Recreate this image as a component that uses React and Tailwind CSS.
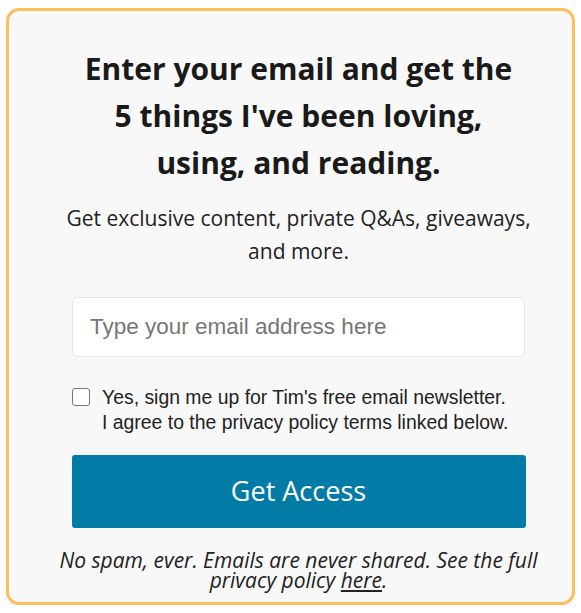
export default function App() {
    return (
        <div className="w-[581px] h-[613px] bg-white pt-[8px] px-[6px]">
            <div className="w-[569px] h-[597px] border-[3px] border-[#fdbe5e] rounded-[13px] bg-[#f8f8f8] flex flex-col items-center pl-[16px] pt-[34px]">
                {/* Heading */}
                <h2 className="text-center font-['Open_Sans',sans-serif] font-bold text-[30px] leading-[47px] text-[#1a1a1a] whitespace-nowrap">
                    Enter your email and get the<br />5 things I've been loving,<br />using, and reading.
                </h2>
                <p className="mt-[16px] text-center font-['Open_Sans',sans-serif] text-[21px] leading-[33px] text-[#222] whitespace-nowrap">
                    Get exclusive content, private Q&amp;As, giveaways,<br />and more.
                </p>

                {/* Email input */}
                <input
                    type="email"
                    placeholder="Type your email address here"
                    className="mt-[29px] w-[453px] h-[60px] bg-white border border-[#e4e4e4] rounded-[6px] px-[17px] font-['Liberation_Sans',Arial,sans-serif] text-[22.5px] text-[#333] placeholder:text-[#767676] outline-none"
                />

                {/* Consent */}
                <label className="mt-[28px] w-[453px] flex items-start gap-[12px] font-['Liberation_Sans',Arial,sans-serif] text-[19.4px] leading-[25px] text-[#222] whitespace-nowrap">
                    <input type="checkbox" className="mt-[3px] w-[18px] h-[18px] shrink-0 appearance-none bg-white border border-[#767676] rounded-[3px]" />
                    <span>Yes, sign me up for Tim's free email newsletter.<br />I agree to the privacy policy terms linked below.</span>
                </label>

                {/* Submit */}
                <button className="mt-[20px] w-[454px] h-[73px] bg-[#027ca7] rounded-[3px] text-white font-['Open_Sans',sans-serif] text-[27px]">
                    Get Access
                </button>

                <p className="mt-[22px] text-center font-['Open_Sans',sans-serif] italic text-[21px] leading-[20px] text-[#222] whitespace-nowrap">
                    No spam, ever. Emails are never shared. See the full<br />privacy policy <a className="underline">here</a>.
                </p>
            </div>
        </div>
    );
}
